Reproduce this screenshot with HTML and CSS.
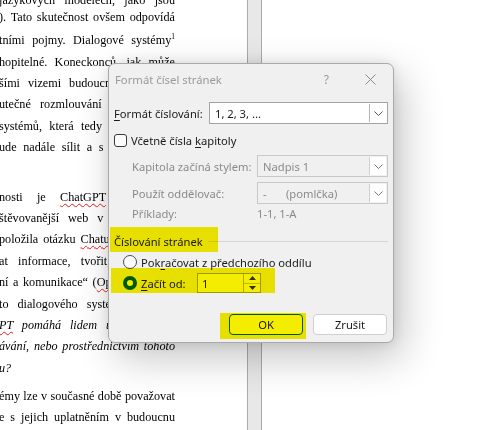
FILE: index.html
```html
<!DOCTYPE html>
<html lang="cs">
<head>
<meta charset="utf-8">
<title>Formát čísel stránek</title>
<link rel="stylesheet" href="styles.css">
</head>
<body>
<div class="desk">
  <div class="page-left">
    <div class="doc">
      <div class="para p1">
        <div class="ln l1">jazykových modelech, jako jsou</div>
        <div class="ln l2">). Tato skutečnost ovšem odpovídá</div>
        <div class="ln">tními pojmy. Dialogové systémy<sup>1</sup></div>
        <div class="ln">hopitelné. Koneckonců, jak může</div>
        <div class="ln">šími vizemi budoucnosti se také</div>
        <div class="ln">utečné rozmlouvání s počítačem</div>
        <div class="ln">systémů, která tedy dnes existují</div>
        <div class="ln">ude nadále sílit a s ním i zájem</div>
      </div>
      <div class="para p2">
        <div class="ln">nosti je <span class="sp">ChatGPT</span> společnosti</div>
        <div class="ln">štěvovanější web v celém světě</div>
        <div class="ln">položila otázku <span class="sp">ChatuGPT</span>, co umí</div>
        <div class="ln">at informace, tvořit, učit se a</div>
        <div class="ln">ní a komunikace“ (<span class="sp">OpenAI</span>, 2023).</div>
        <div class="ln">to dialogového systému je nyní</div>
        <div class="ln it"><span class="sp">PT</span> pomáhá lidem učit se nové</div>
        <div class="ln it">ávání, nebo prostřednictvím tohoto</div>
        <div class="ln it last">u?</div>
      </div>
      <div class="para p3">
        <div class="ln">émy lze v současné době považovat</div>
        <div class="ln">e s jejich uplatněním v budoucnu</div>
      </div>
    </div>
  </div>
  <div class="gutter"></div>
  <div class="page-right"></div>
</div>

<div class="dialog">
  <div class="titlebar">
    <span class="title">Formát čísel stránek</span>
    <span class="help">?</span>
    <svg class="close" width="11" height="11" viewBox="0 0 11 11"><path d="M0.5 0.5 L10.5 10.5 M10.5 0.5 L0.5 10.5" stroke="#8a8a8a" stroke-width="1" fill="none"/></svg>
  </div>
  <div class="body">
    <div class="row r-format">
      <span class="lbl lbl-main"><u>F</u>ormát číslování:</span>
      <div class="select">
        <span class="sel-text">1, 2, 3, ...</span>
        <span class="sel-btn"><svg width="9" height="5" viewBox="0 0 9 5"><path d="M0.5 0.5 L4.5 4.5 L8.5 0.5" stroke="#555" fill="none"/></svg></span>
      </div>
    </div>
    <div class="row r-check">
      <span class="checkbox"></span>
      <span class="lbl">Včetně čísla <u>k</u>apitoly</span>
    </div>
    <div class="row r-sub r-kap">
      <span class="lbl dis lbl-sub">Kapitola začíná stylem:</span>
      <div class="select disabled">
        <span class="sel-text">Nadpis 1</span>
        <span class="sel-btn"><svg width="9" height="5" viewBox="0 0 9 5"><path d="M0.5 0.5 L4.5 4.5 L8.5 0.5" stroke="#777" fill="none"/></svg></span>
      </div>
    </div>
    <div class="row r-sub r-sep">
      <span class="lbl dis lbl-sub">Použít oddělovač:</span>
      <div class="select disabled">
        <span class="sel-text"><span class="dash">-</span>(pomlčka)</span>
        <span class="sel-btn"><svg width="9" height="5" viewBox="0 0 9 5"><path d="M0.5 0.5 L4.5 4.5 L8.5 0.5" stroke="#777" fill="none"/></svg></span>
      </div>
    </div>
    <div class="row r-sub r-ex">
      <span class="lbl dis lbl-sub">Příklady:</span>
      <span class="lbl dis">1-1, 1-A</span>
    </div>
    <div class="row r-section">
      <span class="lbl">Číslování stránek</span>
      <span class="rule"></span>
    </div>
    <div class="row r-radio r-cont">
      <span class="radio"></span>
      <span class="lbl">Pok<u>r</u>ačovat z předchozího oddílu</span>
    </div>
    <div class="row r-radio r-start">
      <span class="radio on"></span>
      <span class="lbl lbl-start"><u>Z</u>ačít od:</span>
      <div class="spin">
        <span class="spin-text">1</span>
        <span class="spin-btns">
          <span class="spin-up"><svg width="7" height="4" viewBox="0 0 7 4"><path d="M3.5 0 L7 4 L0 4 Z" fill="#333"/></svg></span>
          <span class="spin-dn"><svg width="7" height="4" viewBox="0 0 7 4"><path d="M0 0 L7 0 L3.5 4 Z" fill="#333"/></svg></span>
        </span>
      </div>
    </div>
    <div class="buttons">
      <button class="btn btn-ok">OK</button>
      <button class="btn">Zrušit</button>
    </div>
  </div>
  <span class="hl hl-1"></span>
  <span class="hl hl-2"></span>
  <span class="hl hl-3"></span>
</div>
</body>
</html>
```
FILE: styles.css
```css
html, body {
  margin: 0;
  padding: 0;
}
body {
  width: 494px;
  height: 430px;
  overflow: hidden;
  background: #ffffff;
  position: relative;
}
.desk {
  display: flex;
  height: 430px;
}
.page-left {
  width: 247px;
  background: #ffffff;
  overflow: hidden;
}
.gutter {
  width: 13px;
  background: #e8e8e8;
  border-left: 1px solid #ababab;
  border-right: 1px solid #ababab;
}
.page-right {
  flex: 1;
  background: #ffffff;
}
.doc {
  width: 176px;
  margin-top: -9.8px;
  margin-left: -1px;
  font-family: "Liberation Serif", "Times New Roman", serif;
  font-size: 12.2px;
  color: #000;
}
.para .ln {
  line-height: 21.4px;
  height: 21.4px;
  text-align: justify;
  text-align-last: justify;
  overflow: hidden;
}
.para .ln.l1 { height: 16.7px; }
.para .ln.l2 { height: 23.3px; }
.p1 { margin-bottom: 28.1px; }
.p2 { margin-bottom: 6.9px; }
.ln.it { font-style: italic; }
.ln.last { text-align-last: left; }
.ln sup {
  font-size: 7.5px;
  line-height: 0;
  vertical-align: 5px;
}
.sp {
  text-decoration: underline wavy #e02020;
  text-decoration-thickness: 1px;
  text-underline-offset: 2px;
}

/* dialog */
.dialog {
  position: absolute;
  left: 108px;
  top: 63px;
  width: 286px;
  height: 280px;
  box-sizing: border-box;
  background: #f0f0f0;
  border: 1px solid #a9a9a9;
  border-radius: 7px;
  box-shadow: 8px 14px 40px rgba(0,0,0,0.24), 0 0 12px rgba(0,0,0,0.10);
  font-family: "Noto Sans", "Open Sans", sans-serif;
  font-size: 11.2px;
  color: #1a1a1a;
  display: flex;
  flex-direction: column;
}
.titlebar {
  height: 31px;
  display: flex;
  align-items: center;
  padding-left: 6px;
}
.title {
  color: #9a9a9a;
  font-size: 11.3px;
  flex: 1;
}
.help {
  color: #9a9a9a;
  font-size: 12px;
  margin-right: 36px;
}
.close {
  margin-right: 17px;
}
.body {
  flex: 1;
  display: flex;
  flex-direction: column;
  padding: 0 5px 7px 5px;
}
.row {
  display: flex;
  align-items: center;
}
.lbl u { text-decoration-thickness: 1px; text-underline-offset: 2px; }
.dis { color: #8a8a8a; }
.r-format { margin-top: 7px; height: 22px; }
.lbl-main { width: 95px; }
.select {
  flex: 1;
  height: 22px;
  box-sizing: border-box;
  border: 1px solid #a3a3a3;
  background: #ffffff;
  display: flex;
  align-items: center;
}
.select.disabled {
  background: #f0f0f0;
  border-color: #c8c8c8;
  color: #8a8a8a;
}
.sel-text {
  flex: 1;
  padding-left: 5px;
}
.sel-btn {
  width: 16px;
  height: 18px;
  margin-right: 1px;
  border-left: 1px solid #b5b5b5;
  background: #ffffff;
  display: flex;
  align-items: center;
  justify-content: center;
}
.select.disabled .sel-btn {
  border-left-color: #cfcfcf;
}
.dash {
  display: inline-block;
  width: 23px;
}
.r-check { margin-top: 6px; height: 20px; }
.checkbox {
  width: 13px;
  height: 13px;
  box-sizing: border-box;
  border: 1px solid #3a3a3a;
  border-radius: 3px;
  background: #fbfbfb;
  margin-right: 4px;
}
.r-sub { padding-left: 18px; }
.lbl-sub { width: 125px; }
.r-kap { margin-top: 5px; height: 22px; }
.r-sep { margin-top: 5px; height: 22px; }
.r-ex { height: 18px; }
.r-section { margin-top: 10px; height: 18px; }
.rule {
  flex: 1;
  height: 1px;
  background: #d6d6d6;
  margin-left: 5px;
  margin-top: 1px;
}
.r-radio { padding-left: 9px; height: 20px; }
.r-cont { margin-top: 2px; }
.r-start { margin-top: 1px; }
.radio {
  width: 14px;
  height: 14px;
  box-sizing: border-box;
  border: 1px solid #4a4a4a;
  border-radius: 50%;
  background: #fbfbfb;
  margin-right: 4px;
}
.radio.on {
  border: 4px solid #005fb8;
  background: #ffffff;
}
.lbl-start { width: 56px; }
.spin {
  width: 64px;
  height: 20px;
  box-sizing: border-box;
  border: 1px solid #a3a3a3;
  background: #ffffff;
  display: flex;
}
.spin-text {
  flex: 1;
  padding-left: 4px;
  display: flex;
  align-items: center;
}
.spin-btns {
  width: 16px;
  border-left: 1px solid #b5b5b5;
  display: flex;
  flex-direction: column;
}
.spin-up, .spin-dn {
  flex: 1;
  display: flex;
  align-items: center;
  justify-content: center;
}
.spin-up { border-bottom: 1px solid #c8c8c8; }
.buttons {
  margin-top: auto;
  display: flex;
  justify-content: flex-end;
  gap: 10px;
  padding-right: 1px;
}
.btn {
  width: 74px;
  height: 21px;
  box-sizing: border-box;
  border: 1px solid #cfcfcf;
  border-radius: 4px;
  background: #ffffff;
  font-family: "Noto Sans", "Open Sans", sans-serif;
  font-size: 11.2px;
  color: #1a1a1a;
  padding: 0;
}
.btn-ok {
  border: 1px solid #005fb8;
}

/* marker highlights over the dialog */
.hl {
  position: absolute;
  background: #f5ed00;
  mix-blend-mode: multiply;
}
.hl-1 { left: 1px; top: 163px; width: 108px; height: 25px; }
.hl-2 { left: 2px; top: 204px; width: 164px; height: 25px; }
.hl-3 { left: 111px; top: 249px; width: 86px; height: 26px; }
```
